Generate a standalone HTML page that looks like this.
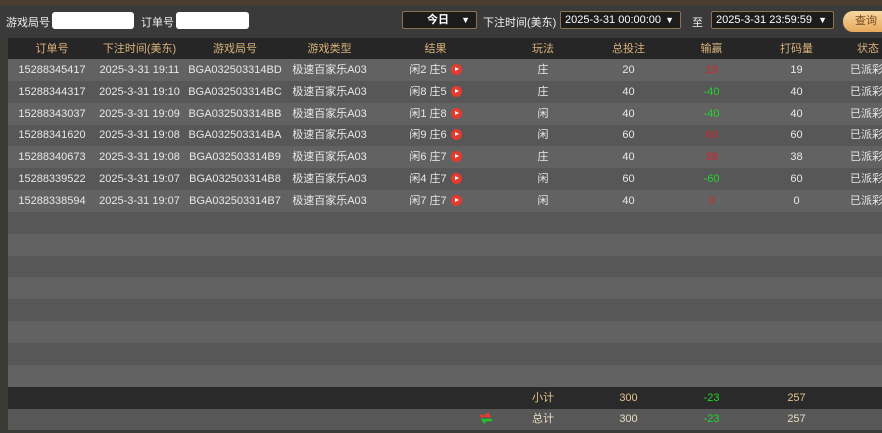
<!DOCTYPE html><html><head><meta charset="utf-8"><style>
body{margin:0;width:882px;height:433px;overflow:hidden;background:#3a3a37;font-family:"Liberation Sans","Noto Sans CJK SC",sans-serif;font-size:11px;color:#e8e8e8;position:relative}
.top{position:absolute;left:0;top:0;width:882px;height:5px;background:#4a3f2e}
.bar{position:absolute;top:5px;left:0;width:882px;height:33px;background:#3a3a3a}
.lbl{position:absolute;top:14px;font-size:11px;color:#eee}
.inp{position:absolute;top:12px;height:17px;background:#fff;border-radius:3px}
.sel{position:absolute;top:11px;height:18px;background:#1c1c1c;border:1px solid #8a7550;border-radius:2px;color:#fff;font-size:11px;line-height:16px;box-sizing:border-box}
.sel span.a{position:absolute;right:6px;top:0;font-size:9px}
.btn{position:absolute;left:843px;top:11px;width:60px;height:21px;border-radius:10px;background:linear-gradient(#f6d7a2,#e7a95d);color:#7a4a1a;font-size:11px;line-height:21px;padding-left:12px;box-sizing:border-box}
table{position:absolute;left:8px;top:38px;border-collapse:collapse;width:874px;table-layout:fixed}
td{padding:0;text-align:center;height:21.85px;white-space:nowrap;overflow:hidden;line-height:12px}
tr.h td{background:#262626;color:#d9b27a;height:21px}
tr.o td{background:#626262}
tr.e td{background:#575757}
tr.s td{background:#2a2a2a;color:#e3c28e}
tr.t td{background:#575757;color:#e8dcc4}
tr td.r{color:#d0262b}tr td.g{color:#22d42a}
.p{display:inline-block;width:11px;height:11px;border-radius:50%;background:#e53a2f;vertical-align:-2px;margin-left:4px;position:relative}
.p:after{content:"";position:absolute;left:4px;top:3px;border-left:4px solid #fff;border-top:2.5px solid transparent;border-bottom:2.5px solid transparent}
tr td.st{text-align:left;padding-left:10px}
</style></head><body>
<div class="top"></div>
<div class="bar"></div>
<div class="lbl" style="left:6px">游戏局号</div>
<div class="inp" style="left:52px;width:82px"></div>
<div class="lbl" style="left:141px">订单号</div>
<div class="inp" style="left:176px;width:73px"></div>
<div class="sel" style="left:402px;width:75px;padding-left:24px;font-weight:bold">今日<span class="a">▼</span></div>
<div class="lbl" style="left:483px">下注时间(美东)</div>
<div class="sel" style="left:560px;width:121px;padding-left:4px">2025-3-31 00:00:00<span class="a">▼</span></div>
<div class="lbl" style="left:692px">至</div>
<div class="sel" style="left:711px;width:123px;padding-left:4px">2025-3-31 23:59:59<span class="a">▼</span></div>
<div class="btn">查询</div>
<table>
<colgroup><col style="width:88px"><col style="width:87px"><col style="width:104px"><col style="width:85px"><col style="width:127px"><col style="width:88px"><col style="width:83px"><col style="width:83px"><col style="width:87px"><col style="width:42px"></colgroup>
<tr class="h"><td>订单号</td><td>下注时间(美东)</td><td>游戏局号</td><td>游戏类型</td><td>结果</td><td>玩法</td><td>总投注</td><td>输赢</td><td>打码量</td><td class="st" style="padding-left:17px">状态</td></tr>
<tr class="o"><td>15288345417</td><td>2025-3-31 19:11</td><td>BGA032503314BD</td><td>极速百家乐A03</td><td>闲2 庄5<span class="p"></span></td><td>庄</td><td>20</td><td class="r">19</td><td>19</td><td class="st">已派彩</td></tr>
<tr class="e"><td>15288344317</td><td>2025-3-31 19:10</td><td>BGA032503314BC</td><td>极速百家乐A03</td><td>闲8 庄5<span class="p"></span></td><td>庄</td><td>40</td><td class="g">-40</td><td>40</td><td class="st">已派彩</td></tr>
<tr class="o"><td>15288343037</td><td>2025-3-31 19:09</td><td>BGA032503314BB</td><td>极速百家乐A03</td><td>闲1 庄8<span class="p"></span></td><td>闲</td><td>40</td><td class="g">-40</td><td>40</td><td class="st">已派彩</td></tr>
<tr class="e"><td>15288341620</td><td>2025-3-31 19:08</td><td>BGA032503314BA</td><td>极速百家乐A03</td><td>闲9 庄6<span class="p"></span></td><td>闲</td><td>60</td><td class="r">60</td><td>60</td><td class="st">已派彩</td></tr>
<tr class="o"><td>15288340673</td><td>2025-3-31 19:08</td><td>BGA032503314B9</td><td>极速百家乐A03</td><td>闲6 庄7<span class="p"></span></td><td>庄</td><td>40</td><td class="r">38</td><td>38</td><td class="st">已派彩</td></tr>
<tr class="e"><td>15288339522</td><td>2025-3-31 19:07</td><td>BGA032503314B8</td><td>极速百家乐A03</td><td>闲4 庄7<span class="p"></span></td><td>闲</td><td>60</td><td class="g">-60</td><td>60</td><td class="st">已派彩</td></tr>
<tr class="o"><td>15288338594</td><td>2025-3-31 19:07</td><td>BGA032503314B7</td><td>极速百家乐A03</td><td>闲7 庄7<span class="p"></span></td><td>闲</td><td>40</td><td class="r">0</td><td>0</td><td class="st">已派彩</td></tr>
<tr class="e"><td colspan="10"></td></tr><tr class="o"><td colspan="10"></td></tr>
<tr class="e"><td colspan="10"></td></tr><tr class="o"><td colspan="10"></td></tr>
<tr class="e"><td colspan="10"></td></tr><tr class="o"><td colspan="10"></td></tr>
<tr class="e"><td colspan="10"></td></tr><tr class="o"><td colspan="10"></td></tr>
<tr class="s"><td></td><td></td><td></td><td></td><td></td><td>小计</td><td>300</td><td class="g">-23</td><td>257</td><td></td></tr>
<tr class="t"><td></td><td></td><td></td><td></td><td style="text-align:right;padding-right:6px"><svg width="14" height="12" viewBox="0 0 14 12"><path d="M1 4h9l-2-3" stroke="#e53a2f" stroke-width="2.5" fill="none"/><path d="M13 8H4l2 3" stroke="#22c22a" stroke-width="2.5" fill="none"/></svg></td><td>总计</td><td>300</td><td class="g">-23</td><td>257</td><td></td></tr>
</table>
</body></html>
